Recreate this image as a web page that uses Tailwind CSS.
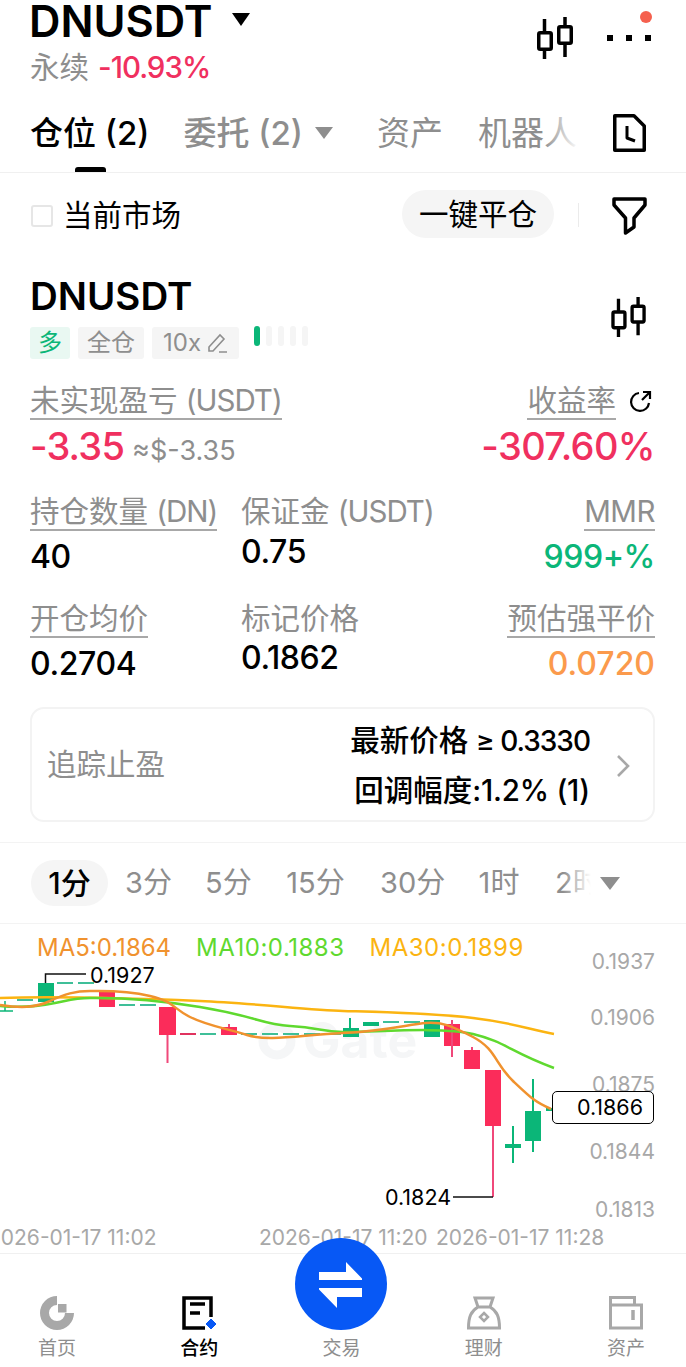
<!DOCTYPE html>
<html lang="zh">
<head>
  <meta charset="UTF-8">
  <meta name="viewport" content="width=device-width, initial-scale=1.0">
  <title>DNUSDT</title>
  <script src="https://cdn.jsdelivr.net/npm/@tailwindcss/browser@4"></script>
</head>
<body class="bg-white font-['Inter','Noto_Sans_CJK_SC',sans-serif] text-black">
  <div class="relative w-[686px] h-[1367px] overflow-hidden flex flex-col">

    <!-- header -->
    <div class="relative h-[90px] shrink-0 pl-[29px] flex flex-col">
      <div class="flex items-center h-[42px]">
        <span class="text-[43.500px] font-semibold leading-[42px]">DNUSDT</span>
        <svg class="ml-[19px] mb-[3px]" width="18" height="14" viewBox="0 0 18 14"><path d="M0 0h18L9 13z" fill="#000"/></svg>
      </div>
      <div class="flex items-center h-[36px] mt-[7px] pl-[1px] text-[29.500px] leading-[36px]">
        <span class="text-[#8e8e8e]">永续</span>
        <span class="ml-[9px] text-[#f0305f] font-medium tracking-[-1px]">-10.93%</span>
      </div>
      <svg class="absolute left-[535px] top-[15px]" width="41" height="46" viewBox="0 0 41 46" fill="none" stroke="#000" stroke-width="3.500"><rect x="3.750" y="17.750" width="12.500" height="16.500" rx="1.500"/><path d="M9.500 4v13M9.500 35v9"/><rect x="23.750" y="11.750" width="12.500" height="16.500" rx="1.500"/><path d="M30 2v9M30 29v13"/></svg>
      <div class="absolute left-[607px] top-[35px] flex gap-[13px]">
        <span class="w-[6px] h-[6px] bg-black"></span><span class="w-[6px] h-[6px] bg-black"></span><span class="w-[6px] h-[6px] bg-black"></span>
      </div>
      <span class="absolute left-[640px] top-[11px] w-[12px] h-[12px] rounded-full bg-[#f5604e]"></span>
    </div>

    <!-- tabs -->
    <div class="relative h-[83px] shrink-0 border-b border-[#f0f0f0] pl-[30px] pt-[3px] flex items-center text-[33px] leading-[44px]">
      <span class="font-medium">仓位 (2)</span>
      <span class="ml-[34px] text-[#8e8e8e] font-medium">委托 (2)</span>
      <svg class="ml-[12px]" width="18" height="12" viewBox="0 0 18 12"><path d="M0 0h18L9 12z" fill="#8e8e8e"/></svg>
      <span class="ml-[44px] text-[#8e8e8e]">资产</span>
      <div class="relative ml-[35px] w-[101px] overflow-hidden whitespace-nowrap text-[#8e8e8e]">
        机器人
        <div class="absolute right-0 top-0 bottom-0 w-[36px] bg-linear-to-r from-white/0 to-white"></div>
      </div>
      <svg class="absolute left-[611px] top-[22px]" width="36" height="42" viewBox="0 0 36 42" fill="none" stroke="#000" stroke-width="3.500" stroke-linejoin="round"><path d="M3.750 3.750H23L33.250 14v24.250H3.750z"/><path d="M16 14v12l8 3" stroke-width="3"/></svg>
      <span class="absolute left-[75px] bottom-0 w-[31px] h-[5px] bg-black rounded-t-[3px]"></span>
    </div>

    <!-- filter row -->
    <div class="relative h-[85px] shrink-0 pl-[31px] flex items-center">
      <span class="w-[22px] h-[22px] rounded-[3px] border-2 border-[#e6e6e6]"></span>
      <span class="ml-[10px] mb-[2px] text-[29.500px] leading-[40px]">当前市场</span>
      <span class="absolute left-[402px] top-[17px] w-[152px] h-[48px] rounded-full bg-[#f5f5f5] flex items-center justify-center text-[29.500px]">一键平仓</span>
      <span class="absolute left-[578px] top-[30px] w-[1px] h-[24px] bg-[#ebebeb]"></span>
      <svg class="absolute left-[611px] top-[23px]" width="36" height="42" viewBox="0 0 36 42" fill="none" stroke="#000" stroke-width="3.500" stroke-linejoin="round"><path d="M3 3h31v6L23 22v9l-8.500 6V22L3 9z"/></svg>
    </div>

    <!-- position card -->
    <div class="relative shrink-0 h-[584px] pl-[30px] pr-[31px]">
      <div class="text-[38.500px] font-semibold leading-[40px] mt-[18px]">DNUSDT</div>
      <div class="flex mt-[11px] gap-[8px] h-[32px] text-[24px] leading-[32px] text-[#8e8e8e]">
        <span class="w-[40px] bg-[#e9f8f2] rounded-[3px] text-center text-[#0bb678]">多</span>
        <span class="w-[66px] bg-[#f5f5f5] rounded-[3px] text-center">全仓</span>
        <span class="w-[87px] bg-[#f5f5f5] rounded-[3px] flex items-center justify-center gap-[5px]">10x
          <svg width="22" height="22" viewBox="0 0 22 22" fill="none" stroke="#8e8e8e" stroke-width="1.600"><path d="M3 15 14 3l4 4L7 19H3zM13 20h8"/></svg>
        </span>
        <div class="flex gap-[6px] ml-[7px] h-[20px] -mt-[1px]">
          <span class="w-[6px] rounded-full bg-[#0bb678]"></span>
          <span class="w-[6px] rounded-full bg-[#f5f5f5]"></span>
          <span class="w-[6px] rounded-full bg-[#f5f5f5]"></span>
          <span class="w-[6px] rounded-full bg-[#f5f5f5]"></span>
          <span class="w-[6px] rounded-full bg-[#f5f5f5]"></span>
        </div>
      </div>
      <svg class="absolute left-[609px] top-[37px]" width="40" height="44" viewBox="0 0 41 46" fill="none" stroke="#000" stroke-width="3.500"><rect x="3.750" y="17.750" width="12.500" height="16.500" rx="1.500"/><path d="M9.500 4v13M9.500 35v9"/><rect x="23.750" y="11.750" width="12.500" height="16.500" rx="1.500"/><path d="M30 2v9M30 29v13"/></svg>

      <!-- pnl -->
      <div class="flex justify-between mt-[24px]">
        <div>
          <span class="inline-block border-b-2 border-[#a8a8a8] text-[29.500px] leading-[35px] text-[#8e8e8e]">未实现盈亏 <span class="tracking-[-1px]">(USDT)</span></span>
          <div class="flex items-baseline mt-[3px] leading-[46px]">
            <span class="text-[38px] font-medium text-[#f0305f] tracking-[-0.8px]">-3.35</span>
            <span class="ml-[8px] text-[27px] text-[#8e8e8e]">≈$-3.35</span>
          </div>
        </div>
        <div class="flex flex-col items-end">
          <div class="flex items-center">
            <span class="inline-block border-b-2 border-[#a8a8a8] text-[29.500px] leading-[35px] text-[#8e8e8e]">收益率</span>
            <svg class="ml-[12px] mr-[3px]" width="24" height="24" viewBox="0 0 24 24" fill="none" stroke="#000" stroke-width="2.200"><path d="M11 3a9 9 0 1 0 10 10M14 10l8-8M15 2h7v7"/></svg>
          </div>
          <span class="mt-[3px] text-[38px] font-medium leading-[46px] text-[#f0305f] tracking-[-0.6px]">-307.60%</span>
        </div>
      </div>

      <!-- row 2 -->
      <div class="grid grid-cols-[211px_1fr_auto] mt-[20px]">
        <div>
          <span class="inline-block border-b-2 border-[#a8a8a8] text-[29.500px] leading-[35px] text-[#8e8e8e]">持仓数量 <span class="tracking-[-1px]">(DN)</span></span>
          <div class="mt-[7px] text-[32px] font-medium leading-[38px] tracking-[-0.4px]">40</div>
        </div>
        <div>
          <span class="inline-block text-[29.500px] leading-[35px] text-[#8e8e8e]">保证金 <span class="tracking-[-1px]">(USDT)</span></span>
          <div class="mt-[4px] text-[32px] font-medium leading-[38px] tracking-[-0.4px]">0.75</div>
        </div>
        <div class="flex flex-col items-end">
          <span class="inline-block border-b-2 border-[#a8a8a8] text-[29.500px] leading-[35px] text-[#8e8e8e] tracking-[-0.5px]">MMR</span>
          <div class="mt-[7px] text-[32px] font-medium leading-[38px] text-[#0bb678] tracking-[-0.4px]">999+%</div>
        </div>
      </div>

      <!-- row 3 -->
      <div class="grid grid-cols-[211px_1fr_auto] mt-[25px]">
        <div>
          <span class="inline-block border-b-2 border-[#a8a8a8] text-[29.500px] leading-[35px] text-[#8e8e8e]">开仓均价</span>
          <div class="mt-[7px] text-[32px] font-medium leading-[38px] tracking-[-0.4px]">0.2704</div>
        </div>
        <div>
          <span class="inline-block text-[29.500px] leading-[35px] text-[#8e8e8e]">标记价格</span>
          <div class="mt-[3px] text-[32px] font-medium leading-[38px] tracking-[-0.4px]">0.1862</div>
        </div>
        <div class="flex flex-col items-end">
          <span class="inline-block border-b-2 border-[#a8a8a8] text-[29.500px] leading-[35px] text-[#8e8e8e]">预估强平价</span>
          <div class="mt-[7px] text-[32px] font-medium leading-[38px] text-[#fb9a4c]">0.0720</div>
        </div>
      </div>

      <!-- trailing stop -->
      <div class="relative mt-[24px] h-[115px] border-2 border-[#f3f3f3] rounded-[14px] flex items-center pl-[15px]">
        <span class="text-[29.500px] text-[#8e8e8e]">追踪止盈</span>
        <div class="absolute right-[63px] top-[7px] flex flex-col items-end text-[29.500px] leading-[49px] font-medium">
          <span>最新价格 <span class="text-[28px] tracking-[-1px]">≥ 0.3330</span></span>
          <span>回调幅度<span class="tracking-[-0.2px]">:1.2% (1)</span></span>
        </div>
        <svg class="absolute right-[22px] top-[45px]" width="16" height="24" viewBox="0 0 16 24" fill="none" stroke="#a8a8a8" stroke-width="2.600"><path d="M3 2l10 10L3 22"/></svg>
      </div>
    </div>

    <!-- timeframes -->
    <div class="relative h-[82px] shrink-0 border-y border-[#f3f3f3] text-[29px] text-[#8e8e8e] flex items-center pl-[31px] whitespace-nowrap">
      <span class="w-[77px] h-[46px] rounded-full bg-[#f5f5f5] text-black font-medium flex items-center justify-center text-[30px]">1分</span>
      <span class="ml-[17px] w-[46px] text-center">3分</span>
      <span class="ml-[34px] w-[45px] text-center">5分</span>
      <span class="ml-[35px] w-[61px] text-center">15分</span>
      <span class="ml-[34px] w-[61px] text-center">30分</span>
      <span class="ml-[36px] w-[44px] text-center">1时</span>
      <div class="relative ml-[34px] w-[36px] overflow-hidden">
        2时
        <div class="absolute right-0 top-0 bottom-0 w-[28px] bg-linear-to-r from-white/0 to-white"></div>
      </div>
      <svg class="ml-[9px]" width="20" height="13" viewBox="0 0 20 13"><path d="M0 0h20L10 13z" fill="#8e8e8e"/></svg>
    </div>

    <!-- chart: free canvas, y coords in the svg are page y -->
    <div class="relative h-[329px] shrink-0 overflow-hidden">
      <svg class="absolute left-0 top-0" width="686" height="329" viewBox="0 924 686 329" fill="none">
        <!-- watermark -->
        <circle cx="277" cy="1041" r="14" stroke="#f5f6f7" stroke-width="9"/>
        <text x="303" y="1058" font-size="50" font-weight="700" fill="#f5f6f7" font-family="Inter">Gate</text>

        <!-- dashes -->
        <g stroke="#3fbf98" stroke-width="2" stroke-dasharray="16 5">
          <path d="M17 1000h16M57 983h38M119 1005h37M200 1034h16M241 1034h100M383 1022h37"/>
        </g>
        <path d="M180 1034h16" stroke="#e0335f" stroke-width="2"/>
        <path d="M0 1011h13M5 1001v10" stroke="#0bb678" stroke-width="1.500"/>

        <!-- green candles -->
        <g fill="#0bb678">
          <rect x="38" y="983" width="16" height="19"/>
          <rect x="343" y="1028" width="16" height="9"/>
          <rect x="363" y="1022" width="16" height="4"/>
          <rect x="424" y="1020" width="16" height="17"/>
          <rect x="505" y="1144" width="16" height="4"/>
          <rect x="525" y="1111" width="16" height="30"/>
          <rect x="546" y="1108" width="6" height="3"/>
        </g>
        <path d="M350 1018v10M513 1126v37M533 1079v73" stroke="#0bb678" stroke-width="2"/>

        <!-- red candles -->
        <g fill="#fb2c5a">
          <rect x="99" y="992" width="16" height="15"/>
          <rect x="159" y="1007" width="17" height="28"/>
          <rect x="221" y="1027" width="16" height="8"/>
          <rect x="444" y="1024" width="16" height="22"/>
          <rect x="464" y="1050" width="16" height="19"/>
          <rect x="485" y="1070" width="16" height="56"/>
        </g>
        <path d="M167.500 1035v28M229 1024v3M452 1020v37M472 1047v3M493 1126v71" stroke="#f0487a" stroke-width="2"/>

        <!-- MA lines -->
        <path d="M0 998C60 996 150 999 200 1001S310 1010 343 1011 430 1013 473 1018 530 1030 554 1034" stroke="#fbb411" stroke-width="2.500"/>
        <path d="M0 1006C20 1008 40 1006 55 1003S75 998 90 998 140 997 200 1007 260 1024 290 1026 320 1031 343 1032 440 1026 473 1034 510 1052 554 1068" stroke="#5fd92f" stroke-width="2.500"/>
        <path d="M0 1005C20 1008 35 1008 50 1001S75 991 90 991 125 990 150 996 172 1008 190 1017 225 1028 247 1035 300 1035 343 1033 410 1024 426 1023 450 1025 473 1037 495 1064 513 1081 535 1102 551 1109" stroke="#f0922e" stroke-width="2.500"/>

        <!-- high / low leaders -->
        <path d="M45.500 983v-9H86M453 1197h40" stroke="#111" stroke-width="1.500"/>
      </svg>

      <div class="absolute left-[37px] top-[10px] flex gap-[25px] text-[24px] leading-[28px] whitespace-nowrap">
        <span class="text-[#f0922e]">MA5:0.1864</span>
        <span class="text-[#5fd92f] tracking-[0.5px]">MA10:0.1883</span>
        <span class="text-[#fbb411] tracking-[0.5px]">MA30:0.1899</span>
      </div>

      <div class="absolute left-[90px] top-[38px] text-[21.500px] leading-[26px]">0.1927</div>
      <div class="absolute left-[385px] top-[260px] text-[21.500px] leading-[26px]">0.1824</div>

      <div class="absolute right-[31px] top-0 text-[21px] leading-[26px] text-[#a8a8a8]">
        <span class="absolute right-0 top-[25px]">0.1937</span>
        <span class="absolute right-0 top-[81px]">0.1906</span>
        <span class="absolute right-0 top-[148px]">0.1875</span>
        <span class="absolute right-0 top-[215px]">0.1844</span>
        <span class="absolute right-0 top-[273px]">0.1813</span>
      </div>

      <div class="absolute left-[552px] top-[167px] w-[102px] h-[33px] border border-black rounded-[5px] bg-white text-right pr-[10px] text-[21.500px] leading-[31px]">0.1866</div>

      <div class="text-[21px] leading-[26px] text-[#a8a8a8] whitespace-nowrap">
        <span class="absolute left-[-12px] top-[301px]">2026-01-17 11:02</span>
        <span class="absolute left-[259px] top-[301px]">2026-01-17 11:20</span>
        <span class="absolute left-[436px] top-[301px]">2026-01-17 11:28</span>
      </div>
    </div>

    <!-- bottom nav -->
    <div class="relative flex-1 border-t border-[#f0f0f0]">
      <div class="-ml-[14px] w-[711px] grid grid-cols-5 text-[19px] leading-[26px] text-[#8e8e8e]">
        <div class="flex flex-col items-center pt-[42px]">
          <svg width="34" height="34" viewBox="0 0 34 34" fill="#a8a8a8"><path d="M17 0v9a8 8 0 1 0 8 8h9A17 17 0 1 1 17 0z"/><rect x="18" y="8" width="8.500" height="8.500"/></svg>
          <span class="mt-[6px]">首页</span>
        </div>
        <div class="flex flex-col items-center pt-[42px] text-black">
          <svg width="34" height="34" viewBox="0 0 34 34" fill="none"><path d="M29 21V2H2v30h21" stroke="#000" stroke-width="3.500"/><path d="M8 8h15M8 17h10" stroke="#000" stroke-width="3.500"/><path d="M29 23l5 5-5 5-5-5z" fill="#0758f5" stroke="#0758f5" stroke-width="1"/></svg>
          <span class="mt-[6px] font-medium">合约</span>
        </div>
        <div class="flex flex-col items-center pt-[82px]">
          <span>交易</span>
        </div>
        <div class="flex flex-col items-center pt-[42px]">
          <svg width="34" height="34" viewBox="0 0 34 34" fill="none" stroke="#a8a8a8" stroke-width="3"><path d="M8 2h18l-3 9H11zM11 11C4 15 1.500 21 1.500 32h31C32.500 21 30 15 23 11"/><path d="M17 17l4 4-4 4-4-4z" stroke-width="2.500"/></svg>
          <span class="mt-[6px]">理财</span>
        </div>
        <div class="flex flex-col items-center pt-[42px]">
          <svg width="34" height="34" viewBox="0 0 34 34" fill="none" stroke="#a8a8a8" stroke-width="3"><path d="M1.500 32V1.500h24V9h7v23zM1.500 9h24"/><path d="M24 14v10" stroke-width="3.500"/></svg>
          <span class="mt-[6px]">资产</span>
        </div>
      </div>
    </div>

    <!-- trade button sits over the nav border -->
    <div class="absolute left-[295px] top-[1238px] w-[92px] h-[92px] rounded-full bg-[#0758f5]">
      <svg width="92" height="92" viewBox="295 1238 92 92" fill="#fff"><path d="M319 1272h27v-10l16 16.500v1.500h-43zM319 1288h43v9h-25v11l-18-18.500z"/></svg>
    </div>
  </div>
</body>
</html>
